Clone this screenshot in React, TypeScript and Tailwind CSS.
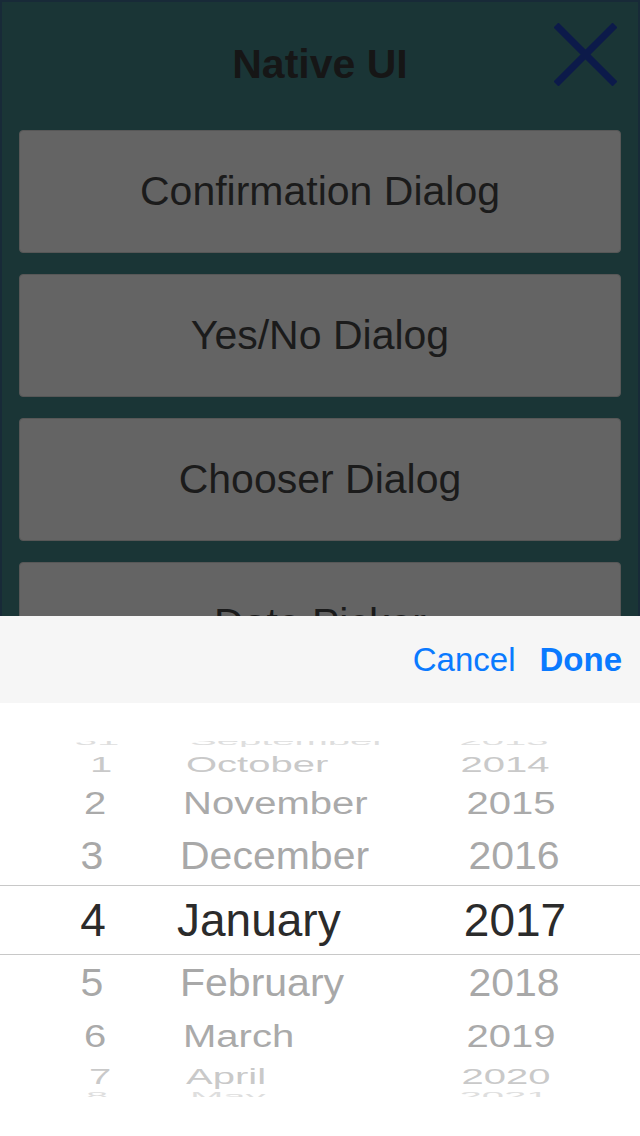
import React from "react";

type Row = {
  d: string;
  m: string;
  y: string;
  h: string;
  extra?: string;
  color: string;
  size: string;
  sy: string;
  dx: string;
  mx: string;
  yx: string;
};

const rows: Row[] = [
  { d: "31", m: "September", y: "2013", h: "h-[16px] -mt-[8px]", color: "text-[#dedede]", size: "text-[40px]", sy: "scale-y-[0.25]", dx: "translate-x-[3px]", mx: "translate-x-[10px]", yx: "-translate-x-[10px]" },
  { d: "1", m: "October", y: "2014", h: "h-[30px]", color: "text-[#c9c9c9]", size: "text-[40px]", sy: "scale-y-[0.55]", dx: "translate-x-[7px]", mx: "translate-x-[6px]", yx: "-translate-x-[9px]" },
  { d: "2", m: "November", y: "2015", h: "h-[48px]", color: "text-[#aaaaaa]", size: "text-[40px]", sy: "scale-y-[0.78]", dx: "translate-x-[1px]", mx: "translate-x-[3px]", yx: "-translate-x-[3px]" },
  { d: "3", m: "December", y: "2016", h: "h-[58px]", color: "text-[#a8a8a8]", size: "text-[41px]", sy: "scale-y-[0.94]", dx: "-translate-x-[2px]", mx: "translate-x-[0px]", yx: "translate-x-[0px]" },
  { d: "4", m: "January", y: "2017", h: "h-[70px] border-y border-[#c8c8c8]", color: "text-[#2b2b2b]", size: "text-[46px]", sy: "scale-y-100", dx: "-translate-x-[1px]", mx: "-translate-x-[3px]", yx: "translate-x-[1px]" },
  { d: "5", m: "February", y: "2018", h: "h-[56px]", color: "text-[#a8a8a8]", size: "text-[41px]", sy: "scale-y-[0.94]", dx: "-translate-x-[2px]", mx: "translate-x-[0px]", yx: "translate-x-[0px]" },
  { d: "6", m: "March", y: "2019", h: "h-[50px]", color: "text-[#aaaaaa]", size: "text-[40px]", sy: "scale-y-[0.78]", dx: "translate-x-[1px]", mx: "translate-x-[3px]", yx: "-translate-x-[3px]" },
  { d: "7", m: "April", y: "2020", h: "h-[30px]", color: "text-[#c9c9c9]", size: "text-[40px]", sy: "scale-y-[0.55]", dx: "translate-x-[6px]", mx: "translate-x-[6px]", yx: "-translate-x-[8px]" },
  { d: "8", m: "May", y: "2021", h: "h-[10px]", color: "text-[#dedede]", size: "text-[40px]", sy: "scale-y-[0.25]", dx: "translate-x-[3px]", mx: "translate-x-[10px]", yx: "-translate-x-[10px]" },
];

const font = "font-['Liberation_Sans',Arial,sans-serif]";

export default function App() {
  return (
    <div className={`w-[640px] h-[1136px] flex flex-col overflow-hidden bg-white ${font}`}>
      {/* dimmed background app */}
      <div className="h-[616px] shrink-0 overflow-hidden bg-[#1a3536] border-t-2 border-x-2 border-[#182a38]">
        <div className="relative h-[124px] flex items-center justify-center">
          <span className="text-[41px] font-bold text-[#161616] leading-none">Native UI</span>
          <svg
            className="absolute left-[552px] top-[21px]"
            width="63"
            height="63"
            viewBox="0 0 63 63"
          >
            <path d="M2 2 L61 61 M61 2 L2 61" stroke="#0c1a4a" strokeWidth="7" fill="none" />
          </svg>
        </div>
        <div className="flex flex-col gap-[21px] px-[17px] pt-[4px]">
          {["Confirmation Dialog", "Yes/No Dialog", "Chooser Dialog", "Date Picker"].map((t) => (
            <div
              key={t}
              className="h-[123px] shrink-0 flex items-center justify-center rounded-[4px] bg-[#646464] border border-[#575757]"
            >
              <span className="text-[41px] leading-none text-[#1b1b1b]">{t}</span>
            </div>
          ))}
        </div>
      </div>

      {/* toolbar */}
      <div className="h-[87px] shrink-0 bg-[#f6f6f6] flex items-center justify-end pr-[18px] gap-[24px] pb-[1px]">
        <span className="text-[33px] leading-none text-[#0a7aff]">Cancel</span>
        <span className="text-[33px] leading-none font-bold text-[#0a7aff]">Done</span>
      </div>

      {/* picker */}
      <div className="flex-1 bg-white pt-[38px]">
        <div className="h-[356px] overflow-hidden flex flex-col">
          {rows.map((r) => (
            <div key={r.d} className={`${r.h} shrink-0 flex items-center`}>
              <div className="pl-[60px] w-[128px] flex justify-center">
                <span className={`inline-block leading-none ${r.size} ${r.color} ${r.sy} ${r.dx}`}>{r.d}</span>
              </div>
              <div className="ml-[52px] w-[232px] flex justify-start">
                <span className={`inline-block leading-none whitespace-nowrap ${r.size} ${r.color} ${r.sy} ${r.mx}`}>{r.m}</span>
              </div>
              <div className="w-[204px] flex justify-center">
                <span className={`inline-block leading-none ${r.size} ${r.color} ${r.sy} ${r.yx}`}>{r.y}</span>
              </div>
            </div>
          ))}
        </div>
      </div>
    </div>
  );
}
